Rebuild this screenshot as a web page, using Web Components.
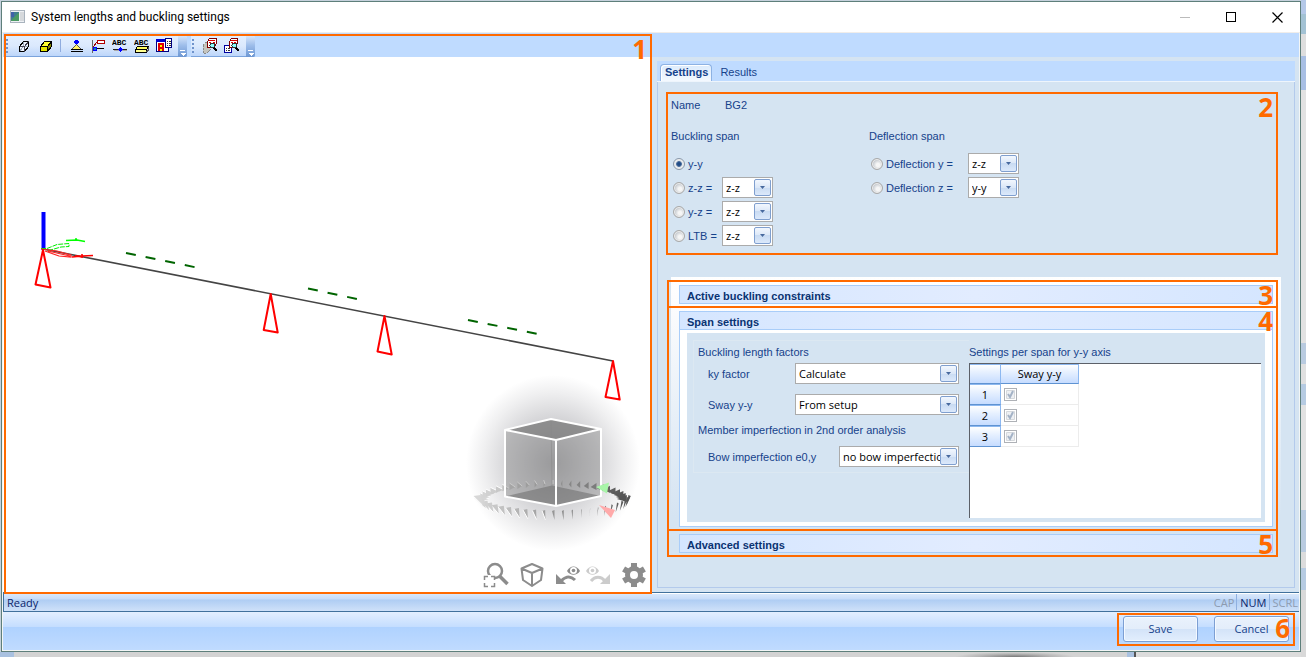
<!DOCTYPE html>
<html lang="en">
<head>
<meta charset="utf-8">
<title>System lengths and buckling settings</title>
<style>
  body { margin: 0; font: 11px/14px "Liberation Sans", Arial, sans-serif; color: #15428b; }
</style>
</head>
<body>
<app-desktop>
  <dialog-window>
    <dialog-title slot="title">System lengths and buckling settings</dialog-title>
    <call-out number="1" class="view"><view-pane></view-pane></call-out>
    <settings-pane slot="side"></settings-pane>
    <status-strip slot="status">Ready</status-strip>
    <button-bar slot="buttons"></button-bar>
  </dialog-window>
</app-desktop>

<script>
const define = (name, html, setup) => {
  const template = document.createElement('template');
  template.innerHTML = html;
  customElements.define(name, class extends HTMLElement {
    constructor() {
      super();
      this.attachShadow({ mode: 'open' }).append(template.content.cloneNode(true));
    }
    connectedCallback() {
      if (!this.ready && setup) setup.call(this, this.shadowRoot);
      this.ready = true;
    }
  });
};

/* ---------- frame ---------- */
define('app-desktop', `
<style>
  :host { display: flex; flex-direction: column; box-sizing: border-box; min-height: 100vh; padding: 1px 5px 5px 1px;
    background:
      linear-gradient(#b4c8e8 14px, #a3c2d4 14px 34px, #dedede 34px 56px, #a8bfe4 56px 90px, #e2e2e2 90px 343px, #b9cbe0 343px 364px, #e0e0e0 364px 384px, #b6cbe2 384px 405px, #e2e2e2 405px 510px, #b9cbe0 510px 552px, #dcdcdc 552px 568px, #b6cbe2 568px 590px, #d9d9d9 590px) right top / 5px 100% no-repeat,
      radial-gradient(60px 5px at 1015px 100%, #777, #b5b5b5 60%, #b5b5b500) left bottom / 100% 5px no-repeat,
      linear-gradient(90deg, #a9c1e0 14px, #d3d3d3 14px 1127px, #a9c1e0 1127px 1134px, #555 1134px 1136px, #dcdcdc 1136px) left bottom / 100% 5px no-repeat,
      #c5d1dc; }
  ::slotted(*) { flex: 1; }
</style><slot></slot>`);

define('dialog-window', `
<style>
  :host { display: flex; flex-direction: column; border: 1px solid #5e7f7b; background: #f3f6f6; }
  main { flex: 1; display: grid; grid-template-columns: 1fr 1fr; margin: 0 1px; background: #d5e4f2; }
  ::slotted(.view) { --t: 1px; --l: 1px; --r: -1px; --b: -2px; z-index: 2; }
</style>
<slot name="title"></slot>
<main><slot></slot><slot name="side"></slot></main>
<slot name="status"></slot>
<slot name="buttons"></slot>`);

define('dialog-title', `
<style>
  :host { display: flex; align-items: center; height: 30px; background: #fff; border-bottom: 1px solid #f0edea; color: #000; font: 12px/16px Roboto, sans-serif; }
  .app { margin: 0 6px 0 8px; }
  span { flex: 1; }
  button { width: 46px; height: 30px; padding: 0; border: 0; background: none; display: grid; place-items: center; }
  svg { display: block; shape-rendering: crispEdges; }
</style>
<svg class="app" width="15" height="14"><rect x=".5" y=".5" width="14" height="12" fill="#eef1f4" stroke="#a9b3bd"/><rect x="1" y="2" width="8" height="9" fill="#3f7f8c"/><path d="M1 11l8-9v9z" fill="#4b9a63"/><path d="M1 2h3v5H1z" fill="#3f62a8"/><rect x="10" y="2" width="4" height="9" fill="#d6d9dc"/></svg>
<span><slot></slot></span>
<button aria-label="Minimize"><svg width="11" height="11"><path d="M0 5.500h10" stroke="#bbb"/></svg></button>
<button aria-label="Maximize"><svg width="11" height="11"><path d="M.5.5h9v9h-9z" fill="none" stroke="#000"/></svg></button>
<button aria-label="Close"><svg width="11" height="11" style="shape-rendering:auto"><path d="M.5.5l10 10M10.500.5l-10 10" stroke="#000" stroke-width="1.200"/></svg></button>`);

/* Numbered orange frame laid over whatever is slotted into it. */
define('call-out', `
<style>
  :host { display: grid; position: relative; }
  i { position: absolute; inset: var(--t, 0) var(--r, 0) var(--b, 0) var(--l, 0); border: 2px solid #ff6a00; pointer-events: none; z-index: 1; }
  b { position: absolute; right: 3px; top: 3px; font: bold 26px/20px "Open Sans", sans-serif; color: #ff6a00; }
</style>
<slot></slot><i><b></b></i>`, function (root) {
  root.querySelector('b').textContent = this.getAttribute('number');
});

/* ---------- left pane ---------- */
const icon = body => `<svg width="16" height="16" viewBox="0 0 16 16" shape-rendering="crispEdges">${body}</svg>`;
const abc = '<text x="0" y="7" font-family="Liberation Mono,monospace" font-size="8" font-weight="bold">ABC</text>';
const icons = {
  'Wireframe': icon('<path d="M3.500 8.500l4-5h5v5l-4 5h-5z" fill="#eef4ff" stroke="#000"/><path d="M7.500 4v5M8 8.500h4M7 9l-3 4" stroke="#9ab"/><path d="M3.500 8.500h5v5M8.500 8.500l4-5" fill="none" stroke="#445"/>'),
  'Solid': icon('<path d="M2.500 8.500l4-5h7l-4 5z" fill="#ffff30" stroke="#000"/><path d="M2.500 8.500h7v5h-7z" fill="#e6e600" stroke="#000"/><path d="M13.500 3.500v5l-4 5v-5z" fill="#8a8a00" stroke="#000"/>'),
  'Supports': icon('<path d="M8.500 5v3" stroke="#00f"/><path d="M7 2h3v1h1v2h-1v1H7V5H6V3h1z" fill="#00f"/><path d="M8.500 6.500l5 5h-10z" fill="#fff36a" stroke="#555"/><path d="M3 11.500h12M3 13.500h12" stroke="#000"/>'),
  'Members': icon('<path d="M2.500 2v13" stroke="#666"/><path d="M7.500 2.500h7v3h-7z" fill="#fff" stroke="#b00000"/><path d="M3 9l4-5" stroke="#900"/><path d="M4 10.500h10" stroke="#000"/><path d="M3 9h3v3H3z" fill="#0a8aa8" stroke="#00f"/>'),
  'Node labels': icon(abc + '<path d="M1 11.500h14" stroke="#222"/><path d="M2 12.500h13" stroke="#aaa"/><path d="M8 9h1v1h1v1h1v1h-1v1H9v1H8v-1H7v-1H6v-1h1v-1h1z" fill="#00f"/>'),
  'Member labels': icon(abc + '<path d="M1.500 11.500l2-3h11l-2 3z" fill="#ffff60" stroke="#000"/><path d="M1.500 11.500h11v3h-11z" fill="#ffff90" stroke="#000"/><path d="M14.500 9v3l-2 2" fill="none" stroke="#555"/>'),
  'View parameters': icon('<path d="M.5 2.500h12v11H.5z" fill="#fff" stroke="#000080"/><path d="M0 1h10v3H0z" fill="#00c"/><path d="M3 13V6h4v7M3 9.500h4" fill="#ff0" stroke="#e00000" stroke-width="2"/><path d="M9.500.5h6v9h-6z" fill="#fff" stroke="#000080"/><path d="M11 3h1M13 3h2M11 5h1M13 5h2M11 7h1M13 7h2" stroke="#333"/>'),
  'Print picture': icon('<path d="M1 7l3-3h4v8l-3 3H1z" fill="#c4c4be" stroke="#888" stroke-dasharray="2 1"/><path d="M5.500 3.500l2-3h7v5l-3 4h-6z" fill="#fff" stroke="#800000"/><path d="M7 2h6M7 4h2M11 4h2" stroke="#d00"/><circle cx="10.500" cy="7.500" r="2.500" fill="#8ff" stroke="#333"/><path d="M12 10l3 3" stroke="#000" stroke-width="2"/>'),
  'Print table': icon('<path d="M.5 7.500h7v7h-7z" fill="#fff" stroke="#0000a0"/><path d="M2 10h1M4 10h2M2 12h1M4 12h2" stroke="#333"/><path d="M5.500 3.500l2-3h6v5l-3 4h-5z" fill="#fff" stroke="#800000"/><path d="M7 2h6M7 4h2M10 4h2" stroke="#d00"/><circle cx="10.500" cy="7.500" r="2.500" fill="#8ff" stroke="#333"/><path d="M12 10l3 3" stroke="#000" stroke-width="2"/>')
};

define('tool-strip', `
<style>
  :host { display: flex; height: 20px; background: linear-gradient(#e3efff, #dbe9fd 50%, #bdd6fa); border-bottom: 1px solid #7aa3dc; border-radius: 0 2px 2px 0; }
  .grip { width: 7px; margin: 3px 0 3px 1px; background: radial-gradient(circle at 1px 1px, #6f93cc 1px, transparent 1px) 0 0 / 7px 4px; }
  .buttons { display: flex; }
  button { border: 0; padding: 0; background: none; }
  .tool { width: 22px; height: 20px; display: grid; place-items: center; }
  hr { margin: 3px 4px 4px 3px; width: 1px; border: 0; background: #8facdf; }
  .more { width: 9px; margin-left: 3px; background: linear-gradient(#d7e6fb, #9dbdea 45%, #6d97d3); border-radius: 0 2px 2px 0; display: grid; place-items: end center; height: 21px; }
</style>
<span class="grip"></span><div class="buttons"></div>
<button class="more" aria-label="Toolbar options"><svg width="7" height="8" shape-rendering="crispEdges"><path d="M1 1.500h5" stroke="#fff"/><path d="M1 4h6l-3 3z" fill="#fff"/></svg></button>`,
function (root) {
  root.querySelector('.buttons').innerHTML = this.getAttribute('tools').split(',').map(n =>
    n === '|' ? '<hr>' : `<button class="tool" aria-label="${n}">${icons[n]}</button>`).join('');
});

define('view-pane', `
<style>
  :host { display: flex; flex-direction: column; background: #fff; }
  .bars { display: flex; gap: 4px; height: 21px; padding: 3px 0 0 2px; background: #bfdbff; }
  model-view { flex: 1; }
</style>
<div class="bars">
  <tool-strip tools="Wireframe,Solid,|,Supports,Members,Node labels,Member labels,View parameters"></tool-strip>
  <tool-strip tools="Print picture,Print table"></tool-strip>
</div>
<model-view></model-view>`);

define('model-view', `
<style>
  :host { display: block; position: relative; min-height: 400px; }
  .scene { position: absolute; inset: 0; width: 100%; height: 100%; }
  nav { position: absolute; right: 5px; bottom: 4px; display: flex; gap: 12px; }
  button { border: 0; padding: 0; background: none; width: 24px; height: 26px; }
  button:nth-child(4) { margin-left: -6px; }
  button svg { display: block; overflow: visible; }
</style>
<svg class="scene" viewBox="3 57 648 535" preserveAspectRatio="xMinYMin meet" fill="none">
  <defs>
    <radialGradient id="glow"><stop offset="0" stop-color="#a9a9ac"/><stop offset=".45" stop-color="#cfcfd2"/><stop offset=".8" stop-color="#efeff0"/><stop offset="1" stop-color="#fff"/></radialGradient>
  </defs>
  <ellipse cx="553" cy="463" rx="87" ry="88" fill="url(#glow)"/>
  <path d="M43 249L613 361" stroke="#444" stroke-width="1.600"/>
  <path d="M126 253L196 267.400M308 288.500L357 299M468 320L538 334" stroke="#006400" stroke-width="2" stroke-dasharray="10 10"/>
  <path d="M43.500 212v38" stroke="#00f" stroke-width="4"/>
  <path d="M41 248.500h6l10-4 12-1v3l-8 .5-14 4" stroke="#0e0" stroke-dasharray="5 1"/>
  <path d="M66 240.500l11-.5 8 1.500M76 238v3" stroke="#0f0" stroke-width="1.500"/>
  <path d="M41 249l16 2 14 4v2l-12-1-14-5M48 251l22 5" stroke="#f22" stroke-width="1.200"/>
  <path d="M72 257l10-1 11-.5M82 254v4M75 256l8 1" stroke="#f00" stroke-width="1.600"/>
  <g stroke="#f00" stroke-width="2" stroke-linejoin="round">
    <path d="M43 250l-7.500 34.500 15 3z"/><path d="M270.700 294l-7 36 14 2.500z"/><path d="M384.500 316l-7 35.500 14.200 3z"/><path d="M613 361l-7.500 36 14.200 2.500z"/>
  </g>
  <g id="back"></g>
  <path d="M505 430l46-11 50 10v67l-45 10-51-9.500z" fill="#8a8a8a" fill-opacity=".45"/>
  <path d="M505 430l46-11 50 10-45 11z" fill="#777" fill-opacity=".6"/>
  <path d="M505 496.500l47-11 49 10.500-45 10z" fill="#666" fill-opacity=".5"/>
  <path d="M551 419l1 67" stroke="#888" stroke-opacity=".5"/>
  <path d="M505 430l46-11 50 10-45 11zM505 430v66.500l51 9.500 45-10v-67M556 440v66" stroke="#fff" stroke-width="2" stroke-linejoin="round"/>
  <g id="front"></g>
  <path d="M596 487l13-4.500-2 11z" fill="#a8f5a8"/><path d="M599 505l16 5-4 8z" fill="#ffaaaa"/>
</svg>
<nav aria-label="View navigation">
  <button aria-label="Zoom to fit"><svg width="24" height="26" fill="none" stroke="#8c8c8c"><circle cx="11" cy="9" r="7" stroke-width="2.500"/><path d="M15.500 14l8 8" stroke-width="3.500"/><path d="M0 13h11v12H0z" fill="#fff" stroke="none"/><path d="M.5 18v-3.500H4M7 14.500h3.500V18M10.500 21v3.500H7M4 24.500H.5V21" stroke-width="1.500"/></svg></button>
  <button aria-label="View direction"><svg width="24" height="26" fill="none" stroke="#8c8c8c" stroke-width="2" stroke-linejoin="round"><path d="M12 2l10.500 4.500L21 18l-9 6-9-6L1.500 6.500zM1.500 6.500L12 11l10.500-4.500M12 11v13"/></svg></button>
  <button aria-label="Previous view"><svg width="24" height="26" fill="none"><path d="M5 19c4-4 9-6 14-1" stroke="#8c8c8c" stroke-width="3"/><path d="M0 12v10h10z" fill="#8c8c8c"/><path d="M11 9c3-6 10-6 13 0-3 5-10 5-13 0z" fill="#8c8c8c"/><circle cx="17.500" cy="8.500" r="3.500" fill="#fff"/><circle cx="17.500" cy="8.500" r="1.800" fill="#8c8c8c"/></svg></button>
  <button aria-label="Next view"><svg width="24" height="26" fill="none"><path d="M5 19c4-5 10-5 14 0" stroke="#ccc" stroke-width="3"/><path d="M24 12v10H14z" fill="#ccc"/><path d="M0 9c3-6 10-6 13 0-3 5-10 5-13 0z" fill="#ccc"/><circle cx="6.500" cy="8.500" r="3.500" fill="#fff"/><circle cx="6.500" cy="8.500" r="1.800" fill="#ccc"/></svg></button>
  <button aria-label="View settings"><svg width="24" height="26" fill="none" stroke="#8c8c8c"><circle cx="12" cy="13" r="6.500" stroke-width="5"/><g stroke-width="6"><path d="M12 1v4M12 21v4M1.600 7l3.500 2M18.900 17l3.500 2M1.600 19l3.500-2M18.900 9l3.500-2"/></g></svg></button>
</nav>`, function (root) {
  const layers = { back: '', front: '' };
  const count = 50;
  for (let k = 0; k < count; k++) {
    const a = (k + 0.5) / count * 2 * Math.PI, c = Math.cos(a), s = Math.sin(a);
    const x = 553 + 74 * c, y = 499 + 16 * s, g = Math.round(150 - 65 * c);
    const d = -c * 10;
    const pts = s < 0
      ? [[x, y - 3], [x, y + 4], [x + d, y + 1]]
      : [[x - 1 - d / 2, y - 4], [x + 1.5, y - 5], [x + 1.5 + d / 6, y + 5]];
    layers[s < 0 ? 'back' : 'front'] += `<polygon points="${pts.map(p => p.map(v => v.toFixed(1))).join(' ')}" fill="rgb(${g},${g},${g})"/>`;
    if (c < 0) layers[s < 0 ? 'back' : 'front'] += `<path d="M${pts[0]}L${pts[2]}" stroke="#fff"/>`;
  }
  for (const n in layers) root.getElementById(n).innerHTML = layers[n];
});

/* ---------- form parts ---------- */
define('combo-field', `
<style>
  :host { display: flex; align-items: center; justify-content: space-between; height: 21px; }
  div { position: relative; width: var(--w, 51px); height: 21px; }
  select { appearance: none; box-sizing: border-box; width: 100%; height: 21px; margin: 0; padding: 0 16px 0 3px; border: 1px solid #ababab; border-radius: 0; background: #fff; color: #000; font: 11px/17px "Open Sans", Tahoma, sans-serif; }
  span { position: absolute; right: 2px; top: 2px; width: 15px; height: 15px; border: 1px solid #7f9fcf; border-radius: 2px; background: linear-gradient(#f2f7fe, #dbe7f7 50%, #c9dbf2 50%, #dce9fb); pointer-events: none; display: grid; place-items: center; }
  svg { display: block; }
</style>
<label for="s"></label>
<div><select id="s"></select><span><svg width="5" height="3"><path d="M0 0h5L2.500 3z" fill="#47699e"/></svg></span></div>`,
function (root) {
  const label = root.querySelector('label'), select = root.querySelector('select');
  if (this.hasAttribute('label')) label.textContent = this.getAttribute('label');
  else { label.remove(); select.setAttribute('aria-label', this.getAttribute('name')); }
  select.innerHTML = `<option>${this.getAttribute('value')}</option>`;
});

define('span-choice', `
<style>
  :host { display: block; box-sizing: border-box; padding: 6px 5px 9px; }
  .name { display: grid; grid-template-columns: 54px 1fr; margin-bottom: 17px; }
  .cols { display: grid; grid-template-columns: 198px 1fr; }
  h3 { font: inherit; margin: 0 0 10px; }
  .rows { display: grid; grid-auto-rows: 21px; row-gap: 3px; align-items: center; justify-items: start; }
  .left { grid-template-columns: 51px 1fr; }
  .right { grid-template-columns: 99px 1fr; }
  label { grid-column: 1; display: flex; align-items: center; gap: 3px; margin-left: 2px; white-space: nowrap; }
  input { appearance: none; box-sizing: border-box; width: 12px; height: 12px; margin: 0; border: 1px solid #a9a9a9; border-radius: 50%; background: radial-gradient(circle at 60% 60%, #f6f6f6 20%, #c9cdd2 60%); box-shadow: inset 0 0 0 1px #eee; }
  input:checked { background: radial-gradient(circle, #1f4a85 20%, #5d7ba5 38%, #e4e8ec 45%); border-color: #8a98aa; }
</style>
<div class="name"><span>Name</span><span>BG2</span></div>
<div class="cols">
  <section><h3>Buckling span</h3><div class="rows left">
    <label><input type="radio" name="b" checked>y-y</label><span></span>
    <label><input type="radio" name="b">z-z =</label><combo-field name="z-z" value="z-z"></combo-field>
    <label><input type="radio" name="b">y-z =</label><combo-field name="y-z" value="z-z"></combo-field>
    <label><input type="radio" name="b">LTB =</label><combo-field name="LTB" value="z-z"></combo-field>
  </div></section>
  <section><h3>Deflection span</h3><div class="rows right">
    <label><input type="radio" name="d">Deflection y =</label><combo-field name="Deflection y" value="z-z"></combo-field>
    <label><input type="radio" name="d">Deflection z =</label><combo-field name="Deflection z" value="y-y"></combo-field>
  </div></section>
</div>`);

define('accordion-item', `
<style>
  :host { display: block; }
  button { display: block; box-sizing: border-box; width: 100%; height: 19px; padding: 2px 7px 0; border: 1px solid #a9cdf9; background: linear-gradient(90deg, #d5e6ff, #e2ecff 50%, #d5e6ff); color: #0a3372; font: bold 11px/14px "Liberation Sans", sans-serif; text-align: left; }
  .body { border: solid #a9cdf9; border-width: 0 1px 1px; background: #fff; padding: 3px 7px 4px; }
  :host(:not([open])) .body { display: none; }
</style>
<button><slot name="heading"></slot></button><div class="body"><slot></slot></div>`,
function (root) {
  root.querySelector('button').setAttribute('aria-expanded', this.hasAttribute('open'));
});

define('sway-table', `
<style>
  :host { display: block; border: solid #5c6068; border-width: 1px 0 0 1px; background: #fff; color: #000; font: 11px/14px "Open Sans", Tahoma, sans-serif; }
  table { border-spacing: 0; }
  th, td { box-sizing: border-box; height: 21px; padding: 0; font-weight: normal; }
  thead th { height: 20px; }
  th { background: linear-gradient(#fff, #e6f0ff 40%, #c6dcff); border: solid #5f93d2; border-width: 1px 1px 1px 0; border-right-color: #8db8f0; border-top-color: #8db8f0; }
  tr > :first-child { width: 31px; }
  tr > :last-child { width: 78px; }
  td { border: solid #ececec; border-width: 0 1px 1px 0; text-align: left; }
  input { appearance: none; display: block; box-sizing: border-box; width: 13px; height: 13px; margin: 0 0 0 3px; border: 1px solid #aeb1b6;
    background: url('data:image/svg+xml,<svg xmlns="http://www.w3.org/2000/svg" width="11" height="11"><path d="M1.500 1.500h8v8h-8z" fill="%23eef0f3" stroke="%23d5d8dc"/><path d="M3 5l2 3 3-6" fill="none" stroke="%23a3b2c6" stroke-width="2"/></svg>') #fff; }
</style>
<table>
  <thead><tr><th></th><th>Sway y-y</th></tr></thead>
  <tbody>
    <tr><th>1</th><td><input type="checkbox" checked disabled aria-label="Sway y-y, span 1"></td></tr>
    <tr><th>2</th><td><input type="checkbox" checked disabled aria-label="Sway y-y, span 2"></td></tr>
    <tr><th>3</th><td><input type="checkbox" checked disabled aria-label="Sway y-y, span 3"></td></tr>
  </tbody>
</table>`);

define('span-settings', `
<style>
  :host { display: grid; grid-template-columns: 282px 1fr; padding: 7px 4px 4px 0; background: #d5e4f2; }
  .factors { margin-left: 6px; padding: 4px 10px 5px 4px; border: 1px solid #dce8f2; border-right: 0; align-self: start; }
  h4 { font: inherit; margin: 0; }
  combo-field { --w: 164px; margin: 4px 0 10px 10px; }
  combo-field + combo-field { margin-bottom: 8px; }
  .bow { --w: 120px; margin: 9px 0 0 10px; }
  .spans { display: flex; flex-direction: column; padding-top: 5px; gap: 4px; }
  sway-table { flex: 1; min-height: 154px; }
</style>
<div class="factors">
  <h4>Buckling length factors</h4>
  <combo-field label="ky factor" value="Calculate"></combo-field>
  <combo-field label="Sway y-y" value="From setup"></combo-field>
  <h4>Member imperfection in 2nd order analysis</h4>
  <combo-field class="bow" label="Bow imperfection e0,y" value="no bow imperfection"></combo-field>
</div>
<div class="spans"><h4>Settings per span for y-y axis</h4><sway-table></sway-table></div>`);

define('settings-pane', `
<style>
  :host { display: flex; flex-direction: column; background: linear-gradient(#bfdbff 24px, #d5e4f2 24px); padding: 28px 4px 4px 6px; }
  .tabs { display: flex; height: 20px; align-items: end; background: #bfdbff; padding-left: 3px; border-bottom: 1px solid #eef5fc; }
  .tabs button { border: 0; background: none; margin: 0; padding: 1px 5px 2px; height: 17px; font: inherit; color: inherit; }
  .tabs button[aria-selected=true] { font-weight: bold; background: linear-gradient(#dcebfc, #f4f9ff); border: solid #8db2e3; border-width: 1px 1px 0; border-radius: 4px 4px 0 0; padding: 0 3px 2px 4px; margin-right: 3px; box-shadow: inset 1px 1px #fff; }
  .page { flex: 1; border: solid #b3caec; border-width: 0 1px 1px; padding: 10px 13px 0; }
  .choice { margin: 0 3px 22px -5px; }
  .accordion { display: grid; gap: 7px; padding: 8px; background: linear-gradient(#fff, #fdfdfe 20px, #d5e4f2 240px); }
  .accordion call-out { --t: -5px; --b: -4px; --l: -12px; --r: -5px; }
</style>
<div class="tabs" role="tablist"><button role="tab" aria-selected="true">Settings</button><button role="tab" aria-selected="false">Results</button></div>
<div class="page">
  <call-out class="choice" number="2"><span-choice></span-choice></call-out>
  <div class="accordion">
    <call-out number="3"><accordion-item><span slot="heading">Active buckling constraints</span></accordion-item></call-out>
    <call-out number="4"><accordion-item open><span slot="heading">Span settings</span><span-settings></span-settings></accordion-item></call-out>
    <call-out number="5"><accordion-item><span slot="heading">Advanced settings</span></accordion-item></call-out>
  </div>
</div>`);

/* ---------- bottom bars ---------- */
define('status-strip', `
<style>
  :host { display: flex; align-items: center; height: 18px; margin: 0 1px; border: solid #41719c; border-width: 1px 0 1px 1px; background: linear-gradient(#fff 1px, #d9e8fb 1px, #c6dbf8 6px, #afcdf3 7px, #cfe1f9); color: #0a246a; font: 11px/14px "Open Sans", sans-serif; }
  span { padding-top: 2px; }
  .msg { flex: 1; padding-left: 3px; }
  .key { padding-left: 3px; padding-right: 2px; border-right: 1px solid #8fb0e0; }
  .key:last-child { padding-right: 1px; border: 0; }
  .off { color: #8d9bb0; }
</style>
<span class="msg"><slot></slot></span><span class="key off">CAP</span><span class="key">NUM</span><span class="key off">SCRL</span>`);

define('button-bar', `
<style>
  :host { display: flex; justify-content: flex-end; margin: 0 1px 1px; padding: 1px 4px 4px; background: linear-gradient(#e3efff, #c4ddff 15px, #afd2ff 15px, #c0dbff); }
  .set { display: flex; gap: 16px; padding: 3px 6px 4px; }
  button { width: 75px; height: 26px; border: 1px solid #7d9fd3; border-radius: 3px; background: linear-gradient(#eaf2fc, #e3edfa 50%, #d3e3f8 50%, #e2eefd); box-shadow: inset 0 0 0 1px #f4f9ff; color: #15428b; font: 11px/14px "Open Sans", sans-serif; padding: 0; }
</style>
<call-out number="6"><div class="set"><button>Save</button><button>Cancel</button></div></call-out>`);
</script>
</body>
</html>
